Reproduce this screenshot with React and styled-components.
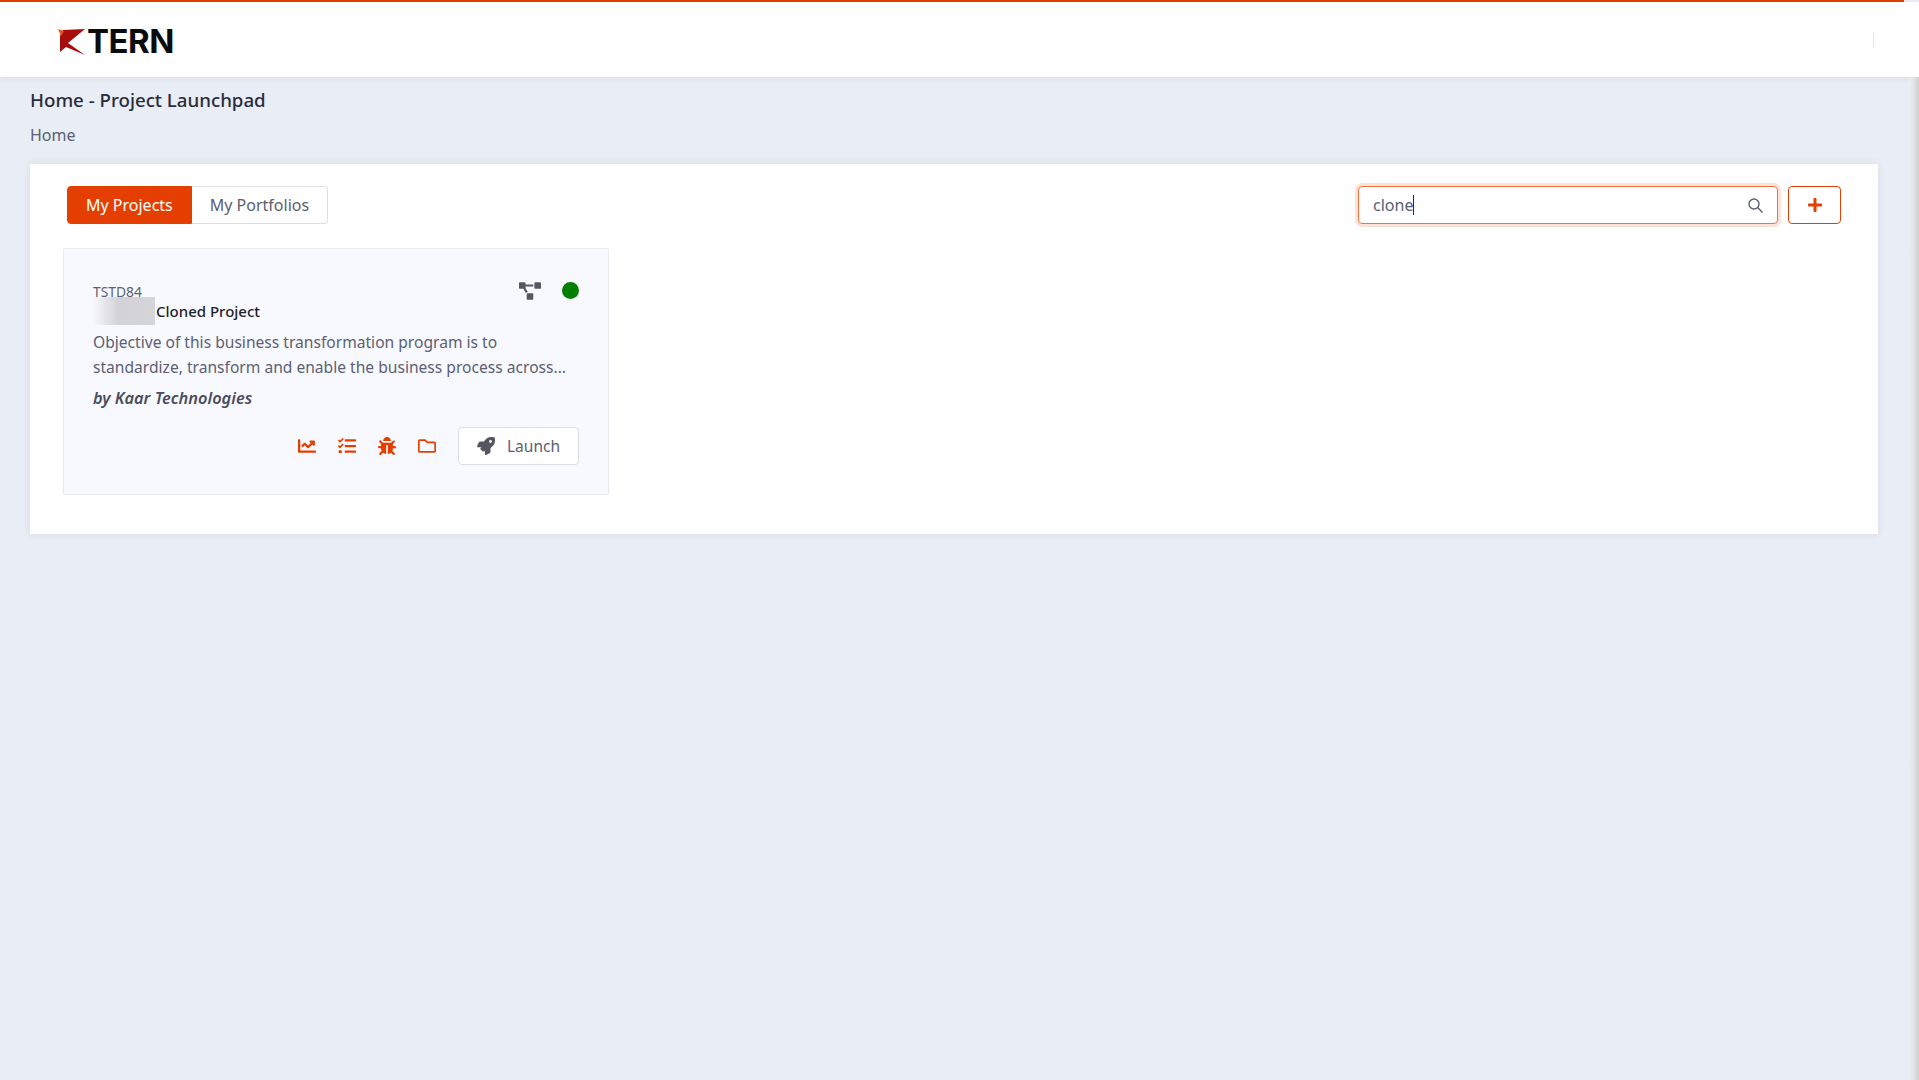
import React from 'react'
import styled, { createGlobalStyle } from 'styled-components'
import { FaBug, FaChartLine, FaPlus, FaProjectDiagram, FaRegFolder, FaRocket, FaTasks } from 'react-icons/fa'

const Global = createGlobalStyle`
  html, body {
    margin: 0;
    padding: 0;
    height: 100%;
    background: #e9edf5;
    overflow: hidden;
  }
  body {
    font-family: "Noto Sans", "Open Sans", sans-serif;
    color: #3f4254;
  }
`

const Page = styled.div`
  min-height: 1080px;
  display: flex;
  flex-direction: column;
  position: relative;
`

const ProgressBar = styled.div`
  height: 2px;
  width: 1904px;
  background: #e43f00;
  box-shadow: 0 0 8px rgba(228, 63, 0, 0.35);
`

const Header = styled.header`
  height: 75px;
  background: #fff;
  display: flex;
  align-items: center;
  justify-content: space-between;
  padding: 0 45px 0 58px;
  box-shadow: 0 2px 6px rgba(60, 70, 100, 0.08);
`

const Logo = styled.div`
  display: flex;
  align-items: center;
  gap: 1px;
  margin-top: 4px;
`

const LogoWord = styled.span`
  font-family: "Inter", "Liberation Sans", sans-serif;
  font-size: 33px;
  font-weight: 700;
  letter-spacing: -0.5px;
  line-height: 1;
  color: #0b0b0b;
`

const HeaderDivider = styled.div`
  width: 1px;
  height: 15px;
  background: #e3e3e3;
`

const ScrollEdge = styled.div`
  position: absolute;
  top: 77px;
  right: 0;
  bottom: 0;
  width: 10px;
  background: linear-gradient(to right, #e9edf5, #e6e6e8 40%, #cfcfd1);
`

const Main = styled.main`
  padding: 0 41px 0 30px;
  display: flex;
  flex-direction: column;
`

const Title = styled.h1`
  margin: 10px 0 0;
  font-size: 18.7px;
  line-height: 26px;
  font-weight: 500;
  color: #2a2c3a;
`

const Crumb = styled.div`
  margin-top: 10px;
  font-size: 16px;
  line-height: 24px;
  color: #5b6073;
`

const Panel = styled.section`
  margin-top: 17px;
  height: 370px;
  box-sizing: border-box;
  background: #fff;
  padding: 22px 37px 0 33px;
  box-shadow: 0 0 8px rgba(60, 70, 100, 0.1);
`

const Toolbar = styled.div`
  display: flex;
  align-items: center;
  justify-content: space-between;
  padding-left: 4px;
`

const Tabs = styled.div`
  display: flex;
`

const Tab = styled.button`
  height: 38px;
  box-sizing: border-box;
  padding: 0 18px;
  font: inherit;
  font-size: 16px;
  cursor: pointer;
  background: ${p => (p.$active ? '#e43f00' : '#fff')};
  color: ${p => (p.$active ? '#fff' : '#5b6073')};
  border: 1px solid ${p => (p.$active ? '#e43f00' : '#dcdde2')};
  border-left-width: ${p => (p.$active ? '1px' : '0')};
  border-radius: ${p => (p.$active ? '4px 0 0 4px' : '0 4px 4px 0')};
`

const Actions = styled.div`
  display: flex;
  align-items: center;
  gap: 10px;
`

const SearchBox = styled.div`
  width: 420px;
  height: 38px;
  box-sizing: border-box;
  display: flex;
  align-items: center;
  padding: 0 14px 0 14px;
  border: 1px solid #f0703f;
  border-radius: 4px;
  box-shadow: 0 0 0 3px rgba(240, 112, 63, 0.2);
  color: #5b6073;
`

const SearchText = styled.div`
  flex: 1;
  font-size: 16px;
  display: flex;
  align-items: center;
`

const Caret = styled.span`
  width: 1px;
  height: 20px;
  background: #2a2c3a;
`

const AddButton = styled.button`
  width: 53px;
  height: 38px;
  border: 1px solid #e43f00;
  border-radius: 4px;
  background: #fff;
  color: #e43f00;
  display: flex;
  align-items: center;
  justify-content: center;
  font-size: 16px;
  padding: 0;
`

const Card = styled.article`
  width: 546px;
  height: 247px;
  box-sizing: border-box;
  margin-top: 24px;
  padding: 33px 29px 0;
  background: #f8f9fe;
  border: 1px solid #e9eaf0;
  border-radius: 2px;
`

const CardTop = styled.div`
  display: flex;
  justify-content: space-between;
  align-items: flex-start;
`

const Code = styled.div`
  font-size: 13.8px;
  line-height: 17px;
  margin-top: 1px;
  color: #5b6073;
`

const StatusIcons = styled.div`
  display: flex;
  align-items: center;
  gap: 21px;
  color: #55565f;
  font-size: 22px;
  height: 17px;
`

const Dot = styled.span`
  width: 17px;
  height: 17px;
  border-radius: 50%;
  background: #008000;
`

const NameRow = styled.div`
  display: flex;
  align-items: center;
  height: 24px;
  margin-top: -1px;
`

// project name is masked in the source, soft on the left and cut off on the right
const Blurred = styled.span`
  width: 63px;
  height: 28px;
  margin-left: -1px;
  margin-right: 1px;
  background: linear-gradient(to right, #f8f9fe, #d2d2d8 42%, #d4d4d9);
`

const Name = styled.span`
  font-size: 15px;
  font-weight: 500;
  color: #1e1f2a;
`

const Desc = styled.p`
  margin: 7px 0 0;
  font-size: 15.6px;
  line-height: 25px;
  color: #5b6073;
`

const Owner = styled.div`
  margin-top: 6px;
  font-size: 16.4px;
  line-height: 24px;
  font-weight: 600;
  font-style: italic;
  color: #4a4d5c;
`

const CardActions = styled.div`
  display: flex;
  align-items: center;
  justify-content: flex-end;
  margin-top: 17px;
  color: #e43f00;
  font-size: 18px;
`

const IconLink = styled.span`
  width: 40px;
  display: flex;
  justify-content: center;
`

const Launch = styled.button`
  margin-left: 11px;
  width: 121px;
  height: 38px;
  display: flex;
  align-items: center;
  justify-content: center;
  gap: 12px;
  background: #fff;
  border: 1px solid #dcdde2;
  border-radius: 4px;
  font: inherit;
  font-size: 15.5px;
  color: #5b6073;
  svg {
    color: #55565f;
    font-size: 18px;
  }
`

const App = () => {
  return (
    <Page>
      <Global />
      <ProgressBar />
      <Header>
        <Logo>
          <svg width="28" height="28" viewBox="0 0 28 28">
            <path d="M5 2L27 1 10 15 27 27 8 19 2 24 2 8z" fill="#a80d0d" />
            <path d="M0 1L6 3 3 8z" fill="#e8501c" />
          </svg>
          <LogoWord>TERN</LogoWord>
        </Logo>
        <HeaderDivider />
      </Header>
      <Main>
        <Title>Home - Project Launchpad</Title>
        <Crumb>Home</Crumb>
        <Panel>
          <Toolbar>
            <Tabs>
              <Tab $active>My Projects</Tab>
              <Tab>My Portfolios</Tab>
            </Tabs>
            <Actions>
              <SearchBox>
                <SearchText>clone<Caret /></SearchText>
                <svg width="15" height="15" viewBox="0 0 15 15" fill="none" stroke="currentColor" strokeWidth="1.4">
                  <circle cx="6" cy="6" r="5" />
                  <path d="M9.6 9.6L14.5 14.5" />
                </svg>
              </SearchBox>
              <AddButton><FaPlus /></AddButton>
            </Actions>
          </Toolbar>
          <Card>
            <CardTop>
              <Code>TSTD84</Code>
              <StatusIcons>
                <FaProjectDiagram />
                <Dot />
              </StatusIcons>
            </CardTop>
            <NameRow>
              <Blurred />
              <Name>Cloned Project</Name>
            </NameRow>
            <Desc>
              Objective of this business transformation program is to<br />
              standardize, transform and enable the business process across...
            </Desc>
            <Owner>by Kaar Technologies</Owner>
            <CardActions>
              <IconLink><FaChartLine /></IconLink>
              <IconLink><FaTasks /></IconLink>
              <IconLink><FaBug /></IconLink>
              <IconLink><FaRegFolder /></IconLink>
              <Launch><FaRocket />Launch</Launch>
            </CardActions>
          </Card>
        </Panel>
      </Main>
      <ScrollEdge />
    </Page>
  )
}

export default App
